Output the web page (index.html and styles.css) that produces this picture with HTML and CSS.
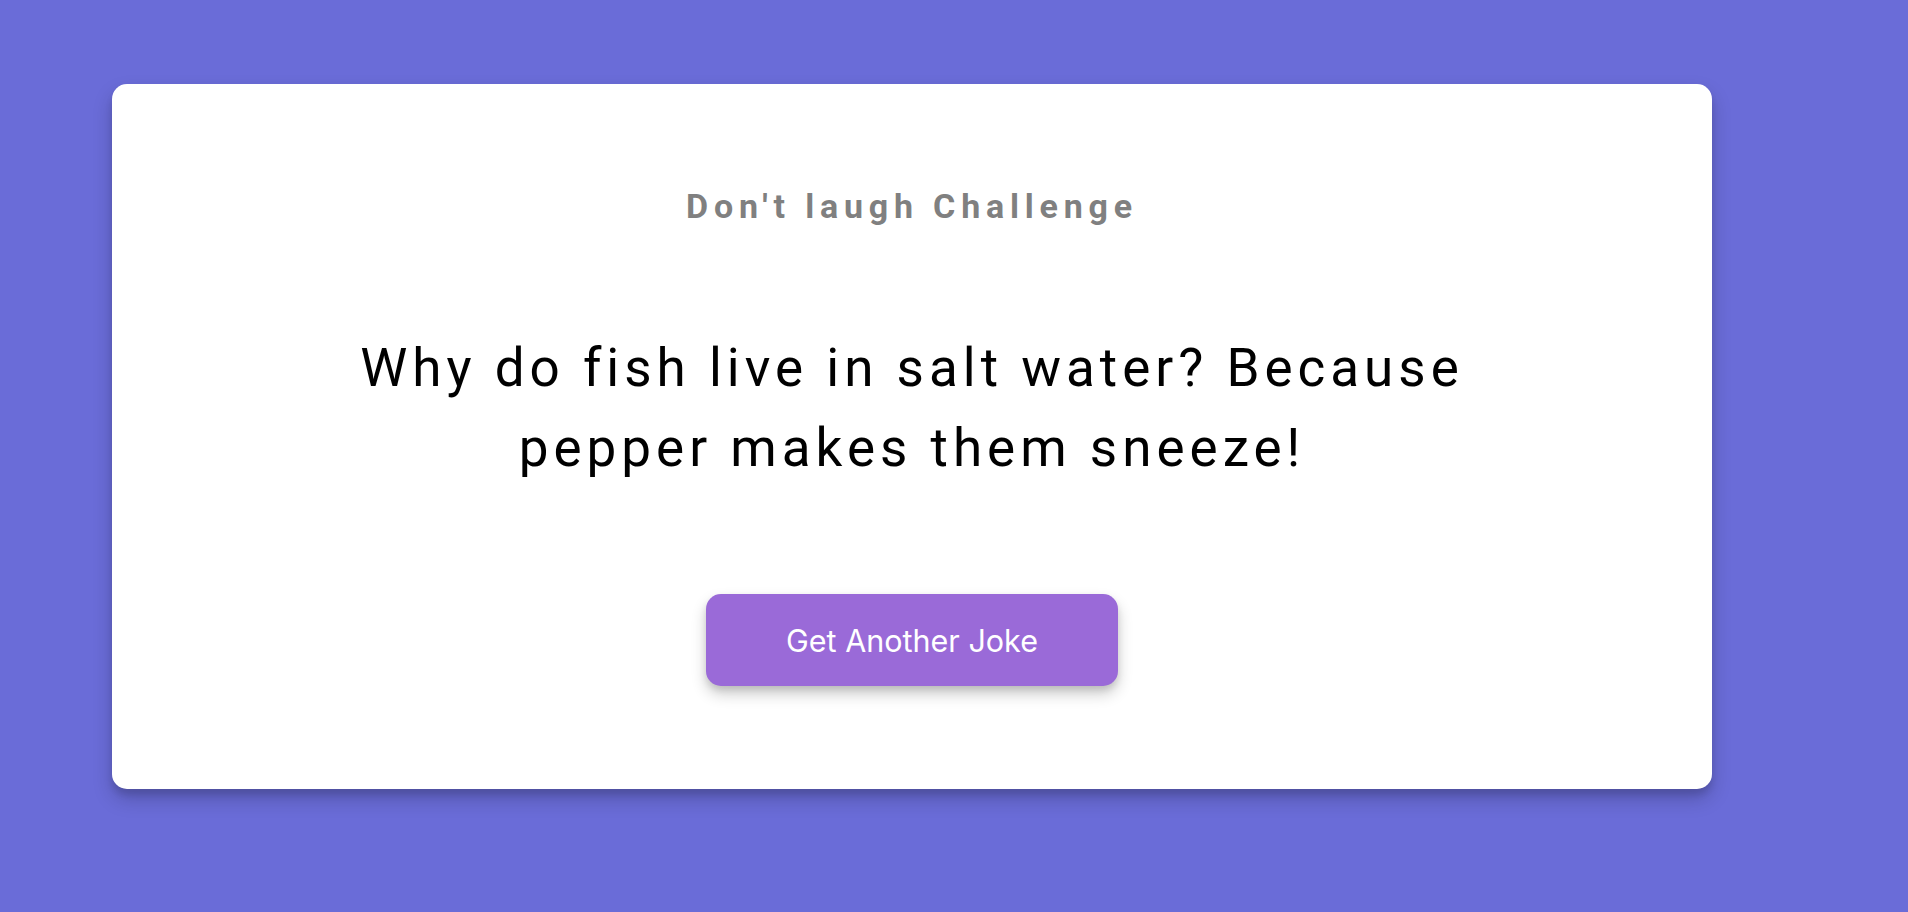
FILE: index.html
```html
<!DOCTYPE html>
<html lang="en">
<head>
<meta charset="utf-8">
<title>Don't laugh Challenge</title>
<link rel="stylesheet" href="styles.css">
</head>
<body>
<div class="card">
  <h3 class="title">Don't laugh Challenge</h3>
  <div class="joke">Why do fish live in salt water? Because pepper makes them sneeze!</div>
  <button class="btn">Get Another Joke</button>
</div>
</body>
</html>
```
FILE: styles.css
```css
html, body {
  margin: 0;
  padding: 0;
}
body {
  background: #6a6cd8;
  min-height: 912px;
  font-family: Roboto, "Liberation Sans", sans-serif;
  padding: 84px 0 0 112px;
  box-sizing: border-box;
}
.card {
  width: 1600px;
  height: 705px;
  box-sizing: border-box;
  background: #ffffff;
  border-radius: 15px;
  box-shadow: 0 10px 20px rgba(0, 0, 0, 0.2), 0 6px 6px rgba(0, 0, 0, 0.1);
  padding: 102px 20px 103px;
  display: flex;
  flex-direction: column;
  align-items: center;
}
.title {
  margin: 0;
  font-size: 34px;
  line-height: 40px;
  font-weight: 700;
  letter-spacing: 5.8px;
  color: #808080;
}
.joke {
  margin-top: 102px;
  max-width: 1180px;
  font-size: 53px;
  line-height: 80px;
  font-weight: 400;
  letter-spacing: 5px;
  color: #000000;
  text-align: center;
}
.btn {
  margin-top: 106px;
  width: 412px;
  height: 92px;
  border: none;
  border-radius: 15px;
  background: #9a6ad8;
  color: #ffffff;
  font-family: Inter, "Noto Sans", sans-serif;
  font-size: 30.5px;
  box-shadow: 0 8px 15px rgba(0, 0, 0, 0.2), 0 4px 6px rgba(0, 0, 0, 0.1);
  cursor: pointer;
}
```
